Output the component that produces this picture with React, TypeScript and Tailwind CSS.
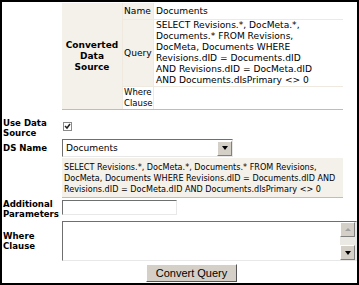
const TOP_QUERY = [
  "SELECT Revisions.*, DocMeta.*,",
  "Documents.* FROM Revisions,",
  "DocMeta, Documents WHERE",
  "Revisions.dID = Documents.dID",
  "AND Revisions.dID = DocMeta.dID",
  "AND Documents.dIsPrimary <> 0",
];

const BOX_QUERY = [
  "SELECT Revisions.*, DocMeta.*, Documents.* FROM Revisions,",
  "DocMeta, Documents WHERE Revisions.dID = Documents.dID AND",
  "Revisions.dID = DocMeta.dID AND Documents.dIsPrimary <> 0",
];

const font = "font-['DejaVu_Sans',Verdana,sans-serif]";

function Label({ children }: { children: React.ReactNode }) {
  return (
    <div className="w-[60px] shrink-0 whitespace-nowrap pl-[1px] text-[8.6px] font-bold leading-[10px] text-black">
      {children}
    </div>
  );
}

function Sunken({ className, children }: { className: string; children?: React.ReactNode }) {
  return (
    <div
      className={`border border-t-[#6f6f6f] border-l-[#6f6f6f] border-r-[#e8e8e8] border-b-[#e8e8e8] bg-white ${className}`}
    >
      {children}
    </div>
  );
}

function ArrowBtn({ up }: { up?: boolean }) {
  return (
    <div className="flex h-[15px] w-[15px] items-center justify-center border border-t-white border-l-white border-r-[#808080] border-b-[#808080] bg-[#d4d0c8]">
      <div
        className={`h-0 w-0 border-x-[3px] border-x-transparent ${
          up ? "border-b-[3px] border-b-[#a0a0a0]" : "border-t-[4px] border-t-black"
        }`}
      />
    </div>
  );
}

function Lines({ lines }: { lines: string[] }) {
  return (
    <div className="whitespace-nowrap">
      {lines.map((l) => (
        <div key={l}>{l}</div>
      ))}
    </div>
  );
}

export default function App() {
  return (
    <div
      className={`h-[285px] w-[359px] overflow-hidden border-2 border-black bg-white text-[9.1px] leading-[11px] text-black ${font}`}
    >
      {/* converted data source summary */}
      <div className="ml-[60px] mt-[1px] w-[281px] border-b border-[#bdbdbd]">
        <div className="grid grid-cols-[60px_30px_1fr] grid-rows-[16px_66px_22px] gap-[1px] bg-[#efe9df]">
          <div className="row-span-3 flex items-center justify-center bg-[#f4f0ea] text-center text-[9px] font-bold leading-[11px]">
            Converted
            <br />
            Data
            <br />
            Source
          </div>
          <div className="flex items-center bg-[#f4f0ea] pl-[1px]">Name</div>
          <div className="flex items-center bg-white pl-[2px]">Documents</div>
          <div className="flex items-center bg-[#f4f0ea] pl-[1px]">Query</div>
          <div className="flex items-center bg-white pl-[2px]">
            <Lines lines={TOP_QUERY} />
          </div>
          <div className="flex items-center bg-white pl-[1px] text-[8.5px] leading-[11px]">
            Where
            <br />
            Clause
          </div>
          <div className="bg-white" />
        </div>
      </div>

      {/* form */}
      <div className="mt-[5px] flex flex-col">
        <div className="flex h-[24px] items-start">
          <Label>
            <div className="pt-[3px] leading-[10px]">
              Use Data
              <br />
              Source
            </div>
          </Label>
          <div className="mt-[7px] ml-[1px] flex h-[9px] w-[9px] items-center justify-center border border-[#8a8a8a] bg-white">
            <svg width="7" height="7" viewBox="0 0 7 7">
              <path d="M1 3 L3 5 L6 1" stroke="#222" strokeWidth="1.5" fill="none" />
            </svg>
          </div>
        </div>

        <div className="flex items-center">
          <Label>DS Name</Label>
          <Sunken className="flex h-[18px] w-[171px] items-center">
            <span className="flex-1 pl-[3px]">Documents</span>
            <ArrowBtn />
          </Sunken>
        </div>

        <div className="flex">
          <div className="w-[60px] shrink-0" />
          <div className="mt-[1px] w-[281px] border-b border-[#bdbdbd] bg-[#f4f0ea] px-[2px] pb-[2px] pt-[4px] text-[8.1px] leading-[11px]">
            <Lines lines={BOX_QUERY} />
          </div>
        </div>

        <div className="flex items-start">
          <Label>
            <div className="pt-[1px]">
              Additional
              <br />
              Parameters
            </div>
          </Label>
          <Sunken className="mt-[2px] h-[15px] w-[115px]" />
        </div>

        <div className="mt-[2px] flex items-center">
          <Label>
            Where
            <br />
            Clause
          </Label>
          <Sunken className="flex h-[40px] w-[295px] justify-end">
            <div className="flex w-[16px] flex-col justify-between bg-[#ebe9e4]">
              <ArrowBtn up />
              <ArrowBtn />
            </div>
          </Sunken>
        </div>

        <div className="mt-[3px] flex justify-center pl-[24px]">
          <button className="h-[18px] w-[91px] border border-t-white border-l-white border-r-[#555] border-b-[#555] bg-[#d4d0c8] font-['Liberation_Sans',Arial,sans-serif] text-[11px] leading-none text-black">
            Convert Query
          </button>
        </div>
      </div>
    </div>
  );
}
